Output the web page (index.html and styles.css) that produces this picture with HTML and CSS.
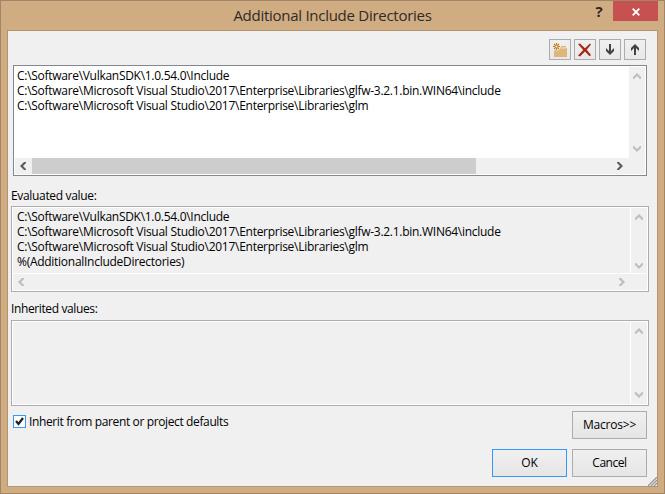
FILE: index.html
```html
<!DOCTYPE html>
<html lang="en">
<head>
<meta charset="utf-8">
<title>Additional Include Directories</title>
<link rel="stylesheet" href="styles.css">
</head>
<body>
<svg width="0" height="0" class="defs">
  <symbol id="up" viewBox="0 0 8 6"><path d="M0 4L4 0L8 4V6H7L4 3L1 6H0Z"/></symbol>
  <symbol id="down" viewBox="0 0 8 6"><path d="M0 2L4 6L8 2V0H7L4 3L1 0H0Z"/></symbol>
  <symbol id="left" viewBox="0 0 6 8"><path d="M4 0L0 4L4 8H6V7L3 4L6 1V0Z"/></symbol>
  <symbol id="right" viewBox="0 0 6 8"><path d="M2 0L6 4L2 8H0V7L3 4L0 1V0Z"/></symbol>
</svg>
<div class="window">
  <header class="titlebar">
    <h1>Additional Include Directories</h1>
    <div class="controls">
      <span class="help">?</span>
      <span class="close"><svg width="8" height="8" viewBox="0 0 8 8"><path d="M.7 .7L7.3 7.3M7.3 .7L.7 7.3" fill="none" stroke="#fff" stroke-width="1.8"/></svg></span>
    </div>
  </header>
  <main class="client">
    <div class="toolbar">
      <span class="tool"><svg width="20" height="19" viewBox="0 0 20 19"><path d="M4 8H10L11 6H16V8H17V17H4Z" fill="#dfb679"/><path d="M11 8H16" stroke="#f3e3c8"/><circle cx="6.5" cy="6.5" r="4" fill="#efefef"/><path d="M6.5 3V10M3 6.500H10M4 4L9 9M9 4L4 9" stroke="#c17d13" fill="none" stroke-width="1.1"/><circle cx="6.500" cy="6.500" r="1" fill="#fff"/></svg></span>
      <span class="tool"><svg width="20" height="19" viewBox="0 0 20 19"><path d="M3 4L5 3.500L10 8.200L15 3.500L16 4.500L11.700 9.700L16 15L14.500 16.300L10 11.600L5 16.500L3 15.500L8.200 9.900Z" fill="#a52714"/></svg></span>
      <span class="tool"><svg width="20" height="19" viewBox="0 0 20 19"><path d="M9 4H11V11L14 8V11L10 15L6 11V8L9 11Z" fill="#424242"/></svg></span>
      <span class="tool"><svg width="20" height="19" viewBox="0 0 20 19"><path d="M9 15H11V8L14 11V8L10 4L6 8V11L9 8Z" fill="#424242"/></svg></span>
    </div>
    <section class="box editor">
      <div class="lines">
        <div class="l1">C:\Software\VulkanSDK\1.0.54.0\Include</div>
        <div class="l2">C:\Software\Microsoft Visual Studio\2017\Enterprise\Libraries\glfw-3.2.1.bin.WIN64\include</div>
        <div class="l3">C:\Software\Microsoft Visual Studio\2017\Enterprise\Libraries\glm</div>
      </div>
      <div class="vbar"><svg class="v"><use href="#up"/></svg><svg class="v"><use href="#down"/></svg></div>
      <div class="hbar"><svg class="h"><use href="#left"/></svg><div class="thumb"></div><svg class="h"><use href="#right"/></svg></div>
      <div class="corner"></div>
    </section>
    <h2>Evaluated value:</h2>
    <section class="box evaluated">
      <div class="lines">
        <div class="l1">C:\Software\VulkanSDK\1.0.54.0\Include</div>
        <div class="l2">C:\Software\Microsoft Visual Studio\2017\Enterprise\Libraries\glfw-3.2.1.bin.WIN64\include</div>
        <div class="l3">C:\Software\Microsoft Visual Studio\2017\Enterprise\Libraries\glm</div>
        <div class="l4">%(AdditionalIncludeDirectories)</div>
      </div>
      <div class="vbar"><svg class="v"><use href="#up"/></svg><svg class="v"><use href="#down"/></svg></div>
      <div class="hbar"><svg class="h"><use href="#left"/></svg><svg class="h"><use href="#right"/></svg></div>
    </section>
    <h2 class="inherited-label">Inherited values:</h2>
    <section class="box inherited">
      <div class="lines"></div>
      <div class="vbar"><svg class="v"><use href="#up"/></svg><svg class="v"><use href="#down"/></svg></div>
    </section>
    <div class="options">
      <div class="check">
        <span class="tick"><svg width="11" height="11" viewBox="0 0 11 11"><path d="M2 5L4.500 8L9 2" fill="none" stroke="#202020" stroke-width="2.200"/></svg></span>
        <span class="check-text">Inherit from parent or project defaults</span>
      </div>
      <div class="button macros">Macros&gt;&gt;</div>
    </div>
    <footer class="actions">
      <div class="button primary">OK</div>
      <div class="button cancel">Cancel</div>
    </footer>
    <svg class="grip" width="9" height="9" viewBox="0 0 9 9"><path d="M0 9L9 0M3 9L9 3M6 9L9 6" stroke="#999" stroke-width="1.300"/></svg>
  </main>
</div>
</body>
</html>
```
FILE: styles.css
```css
* { box-sizing: border-box; }
body { margin: 0; font: 12px/15px "Open Sans", "Noto Sans", sans-serif; color: #000; }
.defs { position: absolute; }
svg { display: block; flex: none; }
.window { width: 665px; height: 494px; border: 1px solid #a18566; background: #cfac82; padding: 0 6px 6px; }
.titlebar { height: 29px; display: grid; grid-template-columns: 1fr; }
h1 { grid-area: 1 / 1; margin: 1px 0 0; text-align: center; font-size: 15px; line-height: 27px; font-weight: 400; letter-spacing: -.27px; color: #302b26; }
.controls { grid-area: 1 / 1; display: flex; justify-content: flex-end; height: 20px; }
.help { width: 10px; margin-right: 9px; font-size: 15px; line-height: 21px; font-weight: 700; text-align: center; color: #2d2720; }
.close { width: 45px; background: #c75050; display: flex; align-items: center; justify-content: center; padding-top: 2px; }
.client { position: relative; height: 457px; border: 1px solid #b39470; background: #f0f0f0; padding: 8px 8px 0 3px; }
.toolbar { display: flex; justify-content: flex-end; gap: 3px; padding-right: 3px; height: 26px; }
.tool { width: 22px; height: 21px; border: 1px solid #acacac; background: linear-gradient(#f0f0f0, #e8e8e8); }
.box { display: grid; grid-template-columns: 1fr 16px; border: 1px solid #adadad; background: #f0f0f0; }
.lines { white-space: nowrap; overflow: hidden; letter-spacing: -.275px; }
.l1 { letter-spacing: -.29px; }
.editor { width: 634px; height: 111px; margin-left: 2px; border-color: #828790; background: #fff; padding: 1px; grid-template-rows: 91px 16px; }
.editor .lines { padding: 1px 0 0 2px; }
.vbar { background: #f0f0f0; display: flex; flex-direction: column; justify-content: space-between; align-items: center; padding: 6px 1px 6px 0; fill: #bdbdbd; }
.hbar { background: #f0f0f0; display: flex; justify-content: space-between; align-items: center; fill: #bdbdbd; }
.corner { background: #f0f0f0; }
.v { width: 8px; height: 6px; }
.h { width: 6px; height: 8px; }
.editor .hbar { padding: 0 6px 0 5px; fill: #5c5c5c; }
.thumb { height: 16px; width: 444px; margin: 0 auto 0 6px; background: #cdcdcd; }
h2 { margin: 13px 0 3px; height: 14px; line-height: 14px; font-size: 12px; font-weight: 400; letter-spacing: -.33px; }
.evaluated, .inherited { width: 638px; height: 86px; padding: 1px; background: #fff; grid-template-columns: 617px 16px; gap: 1px; }
.evaluated { grid-template-rows: 65px 16px; }
.evaluated .lines, .inherited .lines { background: #f0f0f0; }
.evaluated .lines { padding: 1px 0 0 4px; }
.evaluated .vbar { padding: 6px 0 4px; }
.evaluated .hbar { grid-column: 1 / 3; padding: 0 22px 0 5px; }
.inherited .vbar { padding: 6px 0; }
.inherited-label { margin-top: 10px; margin-bottom: 4px; letter-spacing: -.38px; }
.options { display: flex; justify-content: space-between; margin-top: 5px; padding: 0 2px; height: 28px; }
.check { display: flex; padding-top: 4px; }
.tick { width: 13px; height: 13px; border: 1px solid #3399ff; background: #fff; }
.check-text { margin: -1px 0 0 3px; letter-spacing: -.37px; }
.button { width: 75px; height: 28px; border: 1px solid #acacac; background: linear-gradient(#f0f0f0, #e5e5e5); text-align: center; line-height: 26px; letter-spacing: -.2px; }
.cancel { letter-spacing: -.45px; }
.actions { display: flex; justify-content: flex-end; gap: 5px; margin-top: 10px; padding-right: 2px; }
.primary { border-color: #3399ff; }
.grip { position: absolute; right: 0; bottom: 0; }
```
